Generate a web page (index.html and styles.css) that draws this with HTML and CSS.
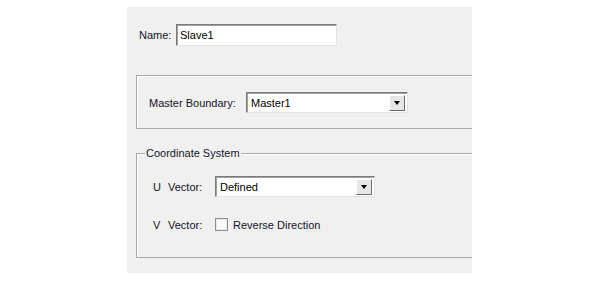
FILE: index.html
```html
<!DOCTYPE html>
<html lang="en">
<head>
  <meta charset="UTF-8">
  <title>Slave Boundary</title>
  <link rel="stylesheet" href="styles.css">
</head>
<body>
  <div class="panel">
    <div class="fila nombre">
      <label class="etq-nombre">Name:</label>
      <input class="texto" type="text" value="Slave1">
    </div>

    <div class="grupo grupo-master">
      <div class="fila">
        <label class="etq-master">Master Boundary:</label>
        <div class="combo combo-master">
          <span class="combo-valor">Master1</span>
          <span class="combo-boton"><span class="flecha"></span></span>
        </div>
      </div>
    </div>

    <fieldset class="grupo grupo-coord">
      <legend>Coordinate System</legend>
      <div class="fila">
        <span class="eje">U</span><span class="etq-vector">Vector:</span>
        <div class="combo combo-vector">
          <span class="combo-valor">Defined</span>
          <span class="combo-boton"><span class="flecha"></span></span>
        </div>
      </div>
      <div class="fila fila-v">
        <span class="eje">V</span><span class="etq-vector">Vector:</span>
        <span class="check"></span>
        <span class="check-texto">Reverse Direction</span>
      </div>
    </fieldset>
  </div>
</body>
</html>
```

FILE: styles.css
```css
body {
  margin: 0;
  background: white;
  font-family: "Liberation Sans", Arial, sans-serif;
  font-size: 11px;
  color: #141428;
}
.panel {
  margin: 7px 0 0 127px;
  width: 345px;
  height: 266px;
  background: #f0f0f0;
  overflow: hidden;
}
.fila { display: flex; align-items: center; }
.nombre { padding: 17px 0 0 12px; }
.etq-nombre { width: 37px; }
.texto {
  box-sizing: border-box;
  width: 161px;
  height: 22px;
  margin: 0;
  padding: 0 3px;
  font: inherit;
  color: #000;
  background: white;
  border: 1px solid;
  border-color: #7a7a7a #e3e3e3 #e3e3e3 #7a7a7a;
  box-shadow: inset 1px 1px #a0a0a0;
  outline: none;
}
.grupo {
  box-sizing: border-box;
  width: 400px;
  margin-left: 9px;
  border: 1px solid #a9a9a9;
  box-shadow: 1px 1px 0 white inset;
}
.grupo-master {
  margin-top: 29px;
  padding: 16px 0 15px 12px;
}
.etq-master { width: 97px; }
.combo {
  box-sizing: border-box;
  display: flex;
  align-items: center;
  height: 21px;
  background: white;
  border: 1px solid;
  border-color: #7a7a7a #e3e3e3 #e3e3e3 #7a7a7a;
  box-shadow: inset 1px 1px #a0a0a0;
  color: #000;
}
.combo-master { width: 162px; }
.combo-vector { width: 160px; }
.combo-valor { flex: 1; padding-left: 4px; }
.combo-boton {
  box-sizing: border-box;
  width: 16px;
  height: 16px;
  margin-right: 2px;
  display: flex;
  align-items: center;
  justify-content: center;
  background: #e6e6e6;
  border: 1px solid;
  border-color: #fff #696969 #696969 #fff;
}
.flecha {
  width: 0;
  height: 0;
  border-left: 3.5px solid transparent;
  border-right: 3.5px solid transparent;
  border-top: 4px solid #000;
}
.grupo-coord {
  margin-top: 18px;
  margin-bottom: 0;
  padding: 16px 0 22px 16px;
}
.grupo-coord legend {
  margin-left: -8px;
  padding: 0 1px;
  line-height: 13px;
}
.eje { width: 15px; }
.etq-vector { width: 47px; }
.fila-v { margin-top: 17px; height: 21px; }
.check {
  box-sizing: border-box;
  width: 13px;
  height: 13px;
  background: #fafafa;
  border: 1px solid #8e8f8f;
  box-shadow: inset 0 0 0 1px #e8e8e8;
}
.check-texto { margin-left: 5px; }
```
